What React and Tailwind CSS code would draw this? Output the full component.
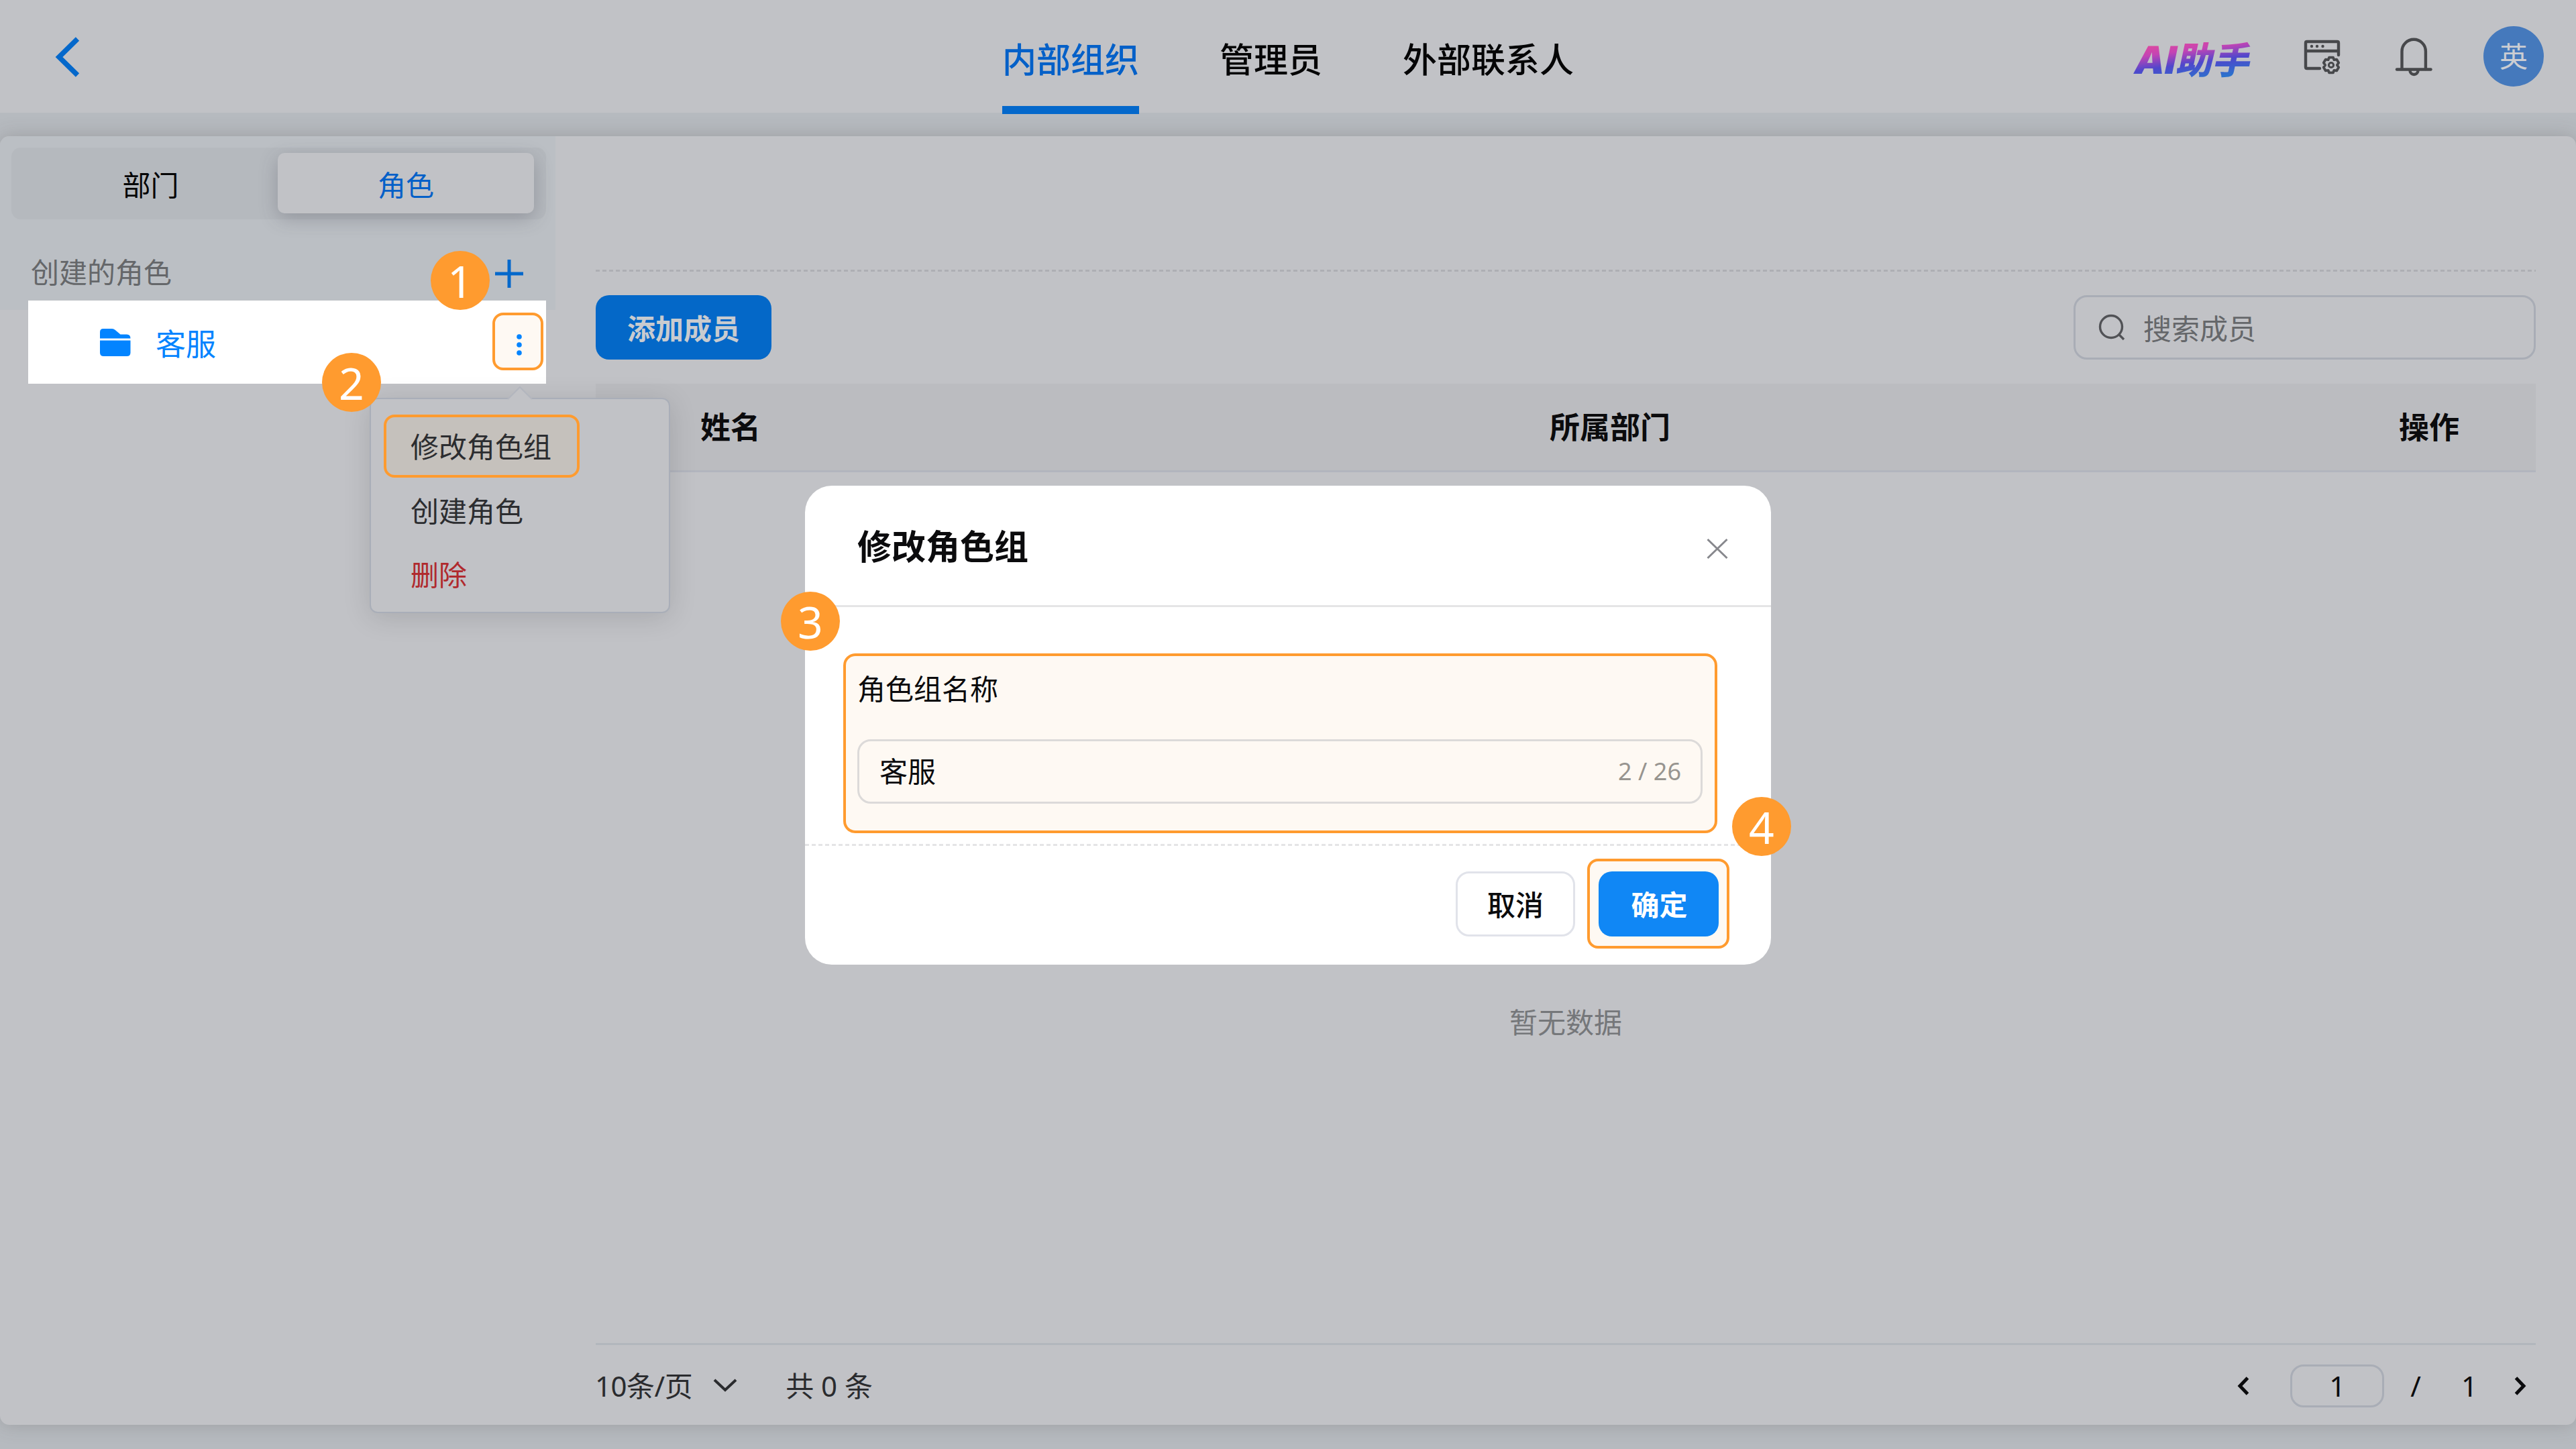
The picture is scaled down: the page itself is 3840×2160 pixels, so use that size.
import { useState } from "react";

const TABS = ["内部组织", "管理员", "外部联系人"];

function WindowGearIcon() {
  return (
    <svg width="56" height="56" viewBox="0 0 56 56" fill="none" stroke="#47484b" strokeWidth="4.4" strokeLinecap="round">
      <path d="M24 45 H5 Q3 45 3 43 V7 Q3 5 5 5 H50 Q52 5 52 7 V25" />
      <path d="M3 19 H52" strokeLinecap="butt" />
      <g fill="#47484b" stroke="none">
        <circle cx="12" cy="12" r="2.2" />
        <circle cx="20" cy="12" r="2.2" />
        <circle cx="28.5" cy="12" r="2.2" />
      </g>
      <g transform="translate(41 40)" strokeWidth="3.8" strokeLinejoin="round">
        <path d="M-3 -11.3 H3 L4.4 -7.8 L8.2 -8.4 L11.2 -3.4 L8.8 0 L11.2 3.4 L8.2 8.4 L4.4 7.8 L3 11.3 H-3 L-4.4 7.8 L-8.2 8.4 L-11.2 3.4 L-8.8 0 L-11.2 -3.4 L-8.2 -8.4 L-4.4 -7.8 Z" />
        <circle r="3.6" strokeWidth="3" />
      </g>
    </svg>
  );
}

function BellIcon() {
  return (
    <svg width="56" height="58" viewBox="0 0 56 58" fill="none" stroke="#47484b" strokeWidth="4.4" strokeLinecap="round">
      <path d="M10.5 47 V20.5 A17.7 17.7 0 0 1 45.9 20.5 V47" />
      <path d="M3 47.5 H53.5" />
      <path d="M22.5 49 A6 6 0 0 0 34.5 49" />
    </svg>
  );
}

function FolderIcon() {
  return (
    <svg width="46" height="41" viewBox="0 0 46 41" fill="#0384ff">
      <path d="M0 14.5 V5 Q0 0 5 0 H18 Q20.5 0 22.5 1.8 L30.5 8.5 H40 Q45.5 8.5 45.5 14.5 Z" />
      <path d="M0 17.5 H45.5 V35.5 Q45.5 41 40 41 H5.5 Q0 41 0 35.5 Z" />
    </svg>
  );
}

function Header() {
  const [active, setActive] = useState(0);

  return (
    <header className="relative z-10 grid h-[168px] grid-cols-[1fr_auto_1fr] bg-[#c1c2c6]">
      <div className="flex items-center pl-[80px]">
        <svg width="40" height="64" viewBox="0 0 40 64" fill="none" stroke="#0468cb" strokeWidth="7.5">
          <path d="M35.5 5 L8 32 L35.5 59" />
        </svg>
      </div>

      <nav className="flex gap-[120px]">
        {TABS.map((tab, i) => (
          <button
            key={tab}
            onClick={() => setActive(i)}
            className={
              i === active
                ? "flex h-[170px] items-center border-b-[12px] border-[#0468cb] pt-[19px] text-[51px] leading-none font-medium text-[#0460c8]"
                : "flex h-[170px] items-center border-b-[12px] border-transparent pt-[19px] text-[51px] leading-none font-medium text-[#050506]"
            }
          >
            {tab}
          </button>
        ))}
      </nav>

      <div className="flex items-center justify-end pr-[48px]">
        <span className="mt-[8px] mr-[77px] flex -skew-x-12 items-baseline bg-[linear-gradient(172deg,#dc48a0_12%,#c444b4_30%,#4f47cc_56%,#2b72cc_88%)] bg-clip-text text-[55px] leading-none font-black text-transparent">
          <span className="mr-[2px] font-['Inter'] text-[57px] leading-none">AI</span>
          助手
        </span>
        <div className="mr-[80px]">
          <WindowGearIcon />
        </div>
        <div className="mr-[76px]">
          <BellIcon />
        </div>
        <div className="mb-[2px] flex h-[90px] w-[90px] items-center justify-center rounded-full bg-[#4579bc] text-[42px] leading-none text-[#cbcdd2]">
          英
        </div>
      </div>
    </header>
  );
}

function Sidebar() {
  return (
    <aside className="w-[828px] shrink-0">
      <div className="h-[259px] rounded-tl-[14px] bg-[#bbbfc4] px-[17px] pt-[17px]">
        <div className="flex h-[107px] w-[797px] rounded-[14px] bg-[#b5b9be] px-[18px] pt-[8px] text-[42px] leading-none">
          <button className="flex h-[91px] flex-1 items-center justify-center pt-[5px] text-[#050506]">部门</button>
          <button className="flex h-[90px] w-[382px] items-center justify-center rounded-[10px] bg-[#c1c2c6] pt-[5px] text-[#0460c8] shadow-[0_8px_28px_rgba(60,60,75,0.28)]">
            角色
          </button>
        </div>
        <div className="mt-[56px] flex items-center justify-between pr-[31px] pl-[29px]">
          <span className="text-[42px] leading-none text-[#65676a]">创建的角色</span>
          <svg width="42" height="42" viewBox="0 0 42 42" stroke="#0468cb" strokeWidth="5" className="mt-[4px]">
            <path d="M21 0 V42 M0 21 H42" />
          </svg>
        </div>
      </div>

      <div className="relative -mt-[14px] ml-[42px] flex h-[124px] w-[772px] items-center bg-white pr-[4px] pl-[107px]">
        <FolderIcon />
        <span className="mt-[4px] ml-[37px] text-[45px] leading-none text-[#0384ff]">客服</span>
        <button className="mb-[2px] ml-auto flex h-[86px] w-[76px] items-center justify-center rounded-[16px] border-4 border-[#ff9b2f] bg-[#fef9f3]">
          <svg width="10" height="32" viewBox="0 0 10 32" fill="#0384ff" className="mt-[10px] ml-[3px]">
            <circle cx="5" cy="4" r="3.8" />
            <circle cx="5" cy="16" r="3.8" />
            <circle cx="5" cy="28" r="3.8" />
          </svg>
        </button>
      </div>
    </aside>
  );
}

function Pagination() {
  return (
    <div className="flex h-[122px] items-center border-t-[3px] border-[#b2b7bd] pt-[3px] text-[42px] leading-none text-[#2a2b2e]">
      <span className="-ml-px tracking-[-0.5px]">10条/页</span>
      <svg width="38" height="22" viewBox="0 0 38 22" fill="none" stroke="#2a2b2e" strokeWidth="4" className="-mt-[2px] ml-[30px]">
        <path d="M3 3 L19 18 L35 3" />
      </svg>
      <span className="ml-[71px]">共 0 条</span>

      <div className="ml-auto flex items-center text-[#0b0b0d]">
        <svg width="20" height="30" viewBox="0 0 20 30" fill="none" stroke="currentColor" strokeWidth="5">
          <path d="M16.5 3 L5 15 L16.5 27" />
        </svg>
        <span className="ml-[60px] flex h-[64px] w-[140px] items-center justify-center rounded-[20px] border-[3px] border-[#a9adb6]">
          1
        </span>
        <span className="ml-[39px]">/</span>
        <span className="ml-[60px]">1</span>
        <svg width="20" height="30" viewBox="0 0 20 30" fill="none" stroke="currentColor" strokeWidth="5" className="mr-[13px] ml-[54px]">
          <path d="M3.5 3 L15 15 L3.5 27" />
        </svg>
      </div>
    </div>
  );
}

function Members() {
  return (
    <main className="flex flex-1 flex-col px-[60px]">
      <div className="h-[199px]" />
      <div className="h-[3px] bg-[repeating-linear-gradient(90deg,#aeafb4_0_6px,transparent_6px_10px)]" />

      <div className="mt-[35px] flex h-[96px] justify-between text-[42px] leading-none">
        <button className="flex w-[262px] items-center justify-center rounded-[20px] bg-[#0468c8] pt-[4px] font-bold text-[#c9cbcf]">
          添加成员
        </button>
        <div className="flex w-[689px] items-center rounded-[20px] border-[3px] border-[#a9adb6] pl-[34px] text-[#65676a]">
          <svg width="40" height="40" viewBox="0 0 40 40" fill="none" stroke="#515256" strokeWidth="3.4">
            <circle cx="19" cy="19" r="16.5" />
            <path d="M31 31 L38 38" />
          </svg>
          <span className="mt-[4px] ml-[27px]">搜索成员</span>
        </div>
      </div>

      <div className="mt-[36px] flex h-[132px] items-center border-b-[3px] border-[#b2b5be] bg-[#bbbcc0] pl-[156px] text-[45px] leading-none font-bold text-[#0b0b0d]">
        <span className="w-[1266px]">姓名</span>
        <span className="w-[1266px]">所属部门</span>
        <span>操作</span>
      </div>

      <div className="flex flex-1 justify-center pt-[799px] text-[42px] leading-none text-[#75777a]">暂无数据</div>
      <Pagination />
    </main>
  );
}

function RoleMenu() {
  return (
    <div className="absolute top-[593px] left-[551px] h-[321px] w-[448px] rounded-[12px] border-2 border-[#a9aeb8] bg-[#c1c2c6] pt-[23px] pl-[19px] text-[42px] leading-none text-[#2c2d30] shadow-[0_6px_40px_rgba(0,0,0,0.13)]">
      <svg width="38" height="22" viewBox="0 0 38 22" className="absolute -top-[20px] left-[203px]">
        <path d="M0 22 L19 2 L38 22 Z" fill="#c1c2c6" />
        <path d="M1 20 L19 2 L37 20" fill="none" stroke="#b3b6be" strokeWidth="2" />
      </svg>
      <div className="flex h-[94px] w-[292px] items-center rounded-[16px] border-4 border-[#ff9b2f] bg-[#c5c1bc] pt-[2px] pl-[36px]">
        修改角色组
      </div>
      <div className="mt-[29px] pl-[40px]">创建角色</div>
      <div className="mt-[53px] pl-[40px] text-[#b02a2e]">删除</div>
    </div>
  );
}

function EditGroupModal() {
  return (
    <div className="absolute top-[724px] left-[1200px] flex h-[714px] w-[1440px] flex-col rounded-[40px] bg-white leading-none text-[#0b0b0d]">
      <div className="flex h-[181px] items-center justify-between border-b-[3px] border-[#e5e5e6] pr-[64px] pl-[78px]">
        <h2 className="mt-[3px] text-[51px] leading-none font-bold">修改角色组</h2>
        <svg width="32" height="32" viewBox="0 0 32 32" stroke="#87888d" strokeWidth="3" className="mt-[9px]">
          <path d="M1.5 2 L30.5 30 M30.5 2 L1.5 30" />
        </svg>
      </div>

      <div className="mt-[69px] ml-[57px] h-[268px] w-[1303px] rounded-[18px] border-4 border-[#ff9b2f] bg-[#fef9f3] pr-[18px] pl-[17px] pt-[28px] text-[42px]">
        <label className="block">角色组名称</label>
        <div className="mt-[54px] flex h-[96px] items-center justify-between rounded-[20px] border-[3px] border-[#dcdad9] pr-[29px] pl-[30px]">
          <span>客服</span>
          <span className="text-[36px] text-[#97948f]">2 / 26</span>
        </div>
      </div>

      <div className="mt-[16px] h-[3px] bg-[repeating-linear-gradient(90deg,#e4e4e6_0_6px,transparent_6px_10px)]" />

      <div className="flex items-center justify-end gap-[18px] pt-[19px] pr-[62px] text-[42px] font-medium">
        <button className="flex h-[97px] w-[178px] items-center justify-center rounded-[20px] border-[3px] border-[#e1e3ea] pt-[3px]">
          取消
        </button>
        <div className="flex h-[134px] w-[212px] items-center justify-center rounded-[16px] border-4 border-[#ff9b2f] bg-[#fef9f3]">
          <button className="ml-px flex h-[97px] w-[179px] items-center justify-center rounded-[20px] bg-[#1087f5] pt-[3px] pl-[2px] font-bold text-white">
            确定
          </button>
        </div>
      </div>
    </div>
  );
}

function StepBadge({ n, className }) {
  return (
    <div
      className={`absolute z-20 flex h-[88px] w-[88px] items-center justify-center rounded-full bg-[#ff9b2f] text-[66px] leading-none text-white ${className}`}
    >
      {n}
    </div>
  );
}

function App() {
  return (
    <div className="relative flex h-[2160px] w-[3840px] flex-col overflow-hidden bg-[#b6babf] font-['Noto_Sans','Noto_Sans_CJK_SC',sans-serif]">
      <Header />
      <div className="mt-[35px] flex h-[1921px] rounded-[14px] bg-[#c1c2c6] shadow-[0_0_28px_rgba(80,70,70,0.25)]">
        <Sidebar />
        <Members />
      </div>

      <RoleMenu />
      <EditGroupModal />

      <StepBadge n={1} className="top-[374px] left-[642px]" />
      <StepBadge n={2} className="top-[526px] left-[480px]" />
      <StepBadge n={3} className="top-[882px] left-[1164px]" />
      <StepBadge n={4} className="top-[1188px] left-[2582px]" />
    </div>
  );
}

export default App;
